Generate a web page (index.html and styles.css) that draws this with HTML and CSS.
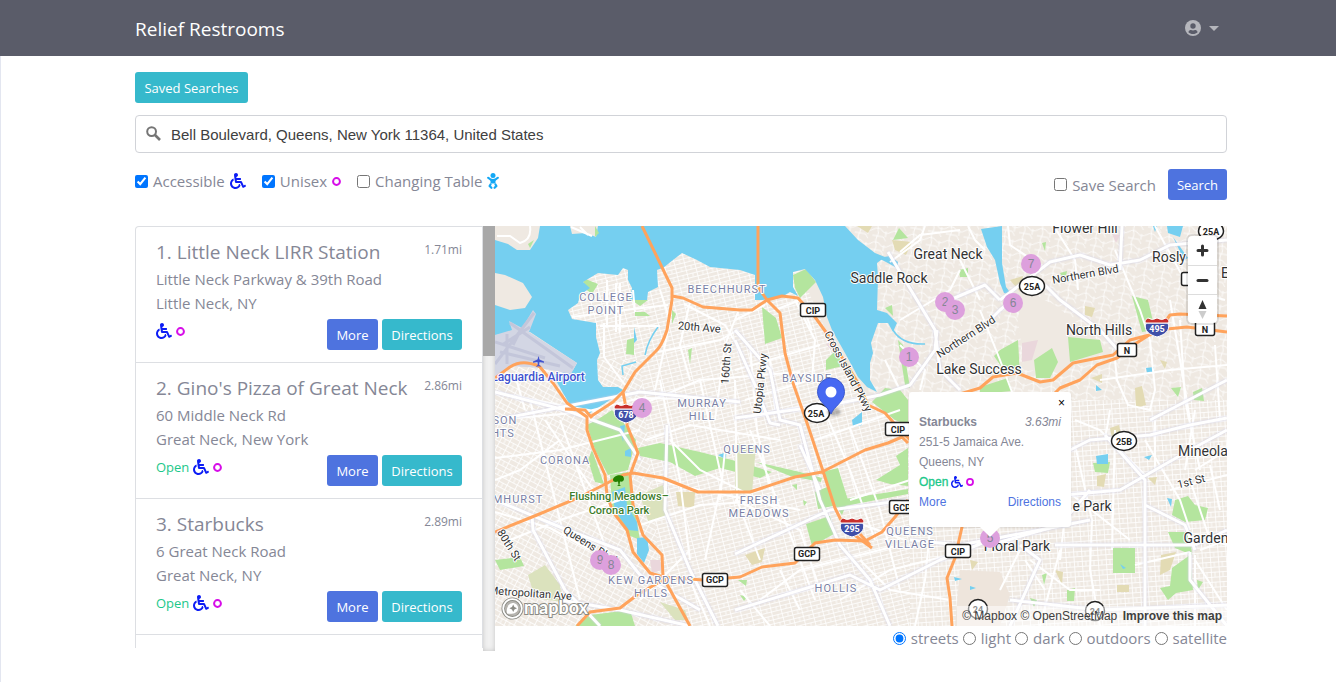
FILE: index.html
```html
<!DOCTYPE html>
<html lang="en">
<head>
<meta charset="utf-8">
<meta name="viewport" content="width=device-width, initial-scale=1">
<title>Relief Restrooms</title>
<link rel="stylesheet" href="styles.css">
</head>
<body>
<svg class="defs" aria-hidden="true">
  <symbol id="wheelchair" viewBox="0 0 512 512"><path d="M496.101 385.669l14.227 28.663c3.929 7.915.697 17.516-7.218 21.445l-65.465 32.886c-16.049 7.967-35.556 1.194-43.189-15.055L331.679 320H192c-15.925 0-29.426-11.71-31.679-27.475C126.433 55.308 128.38 70.044 128 64c0-36.358 30.318-65.635 67.052-63.929 33.271 1.545 60.048 28.905 60.925 62.201.868 32.933-23.152 60.423-54.608 65.039l4.67 32.69H336c8.837 0 16 7.163 16 16v32c0 8.837-7.163 16-16 16H215.182l4.572 32H352a32 32 0 0 1 28.962 18.392L438.477 396.8l36.178-18.349c7.915-3.929 17.517-.697 21.446 7.218zM311.358 352h-24.506c-7.788 54.204-54.528 96-110.852 96-61.757 0-112-50.243-112-112 0-41.505 22.694-77.809 56.324-97.156-3.712-25.965-6.844-47.86-9.488-66.333C45.956 198.464 0 261.963 0 336c0 97.047 78.953 176 176 176 71.87 0 133.806-43.308 161.11-105.192L311.358 352z"/></symbol>
  <symbol id="ring" viewBox="0 0 10 10"><circle cx="5" cy="5" r="3.8" fill="none" stroke="currentColor" stroke-width="2.2"/></symbol>
</svg>

<header class="navbar">
  <a class="brand" href="#">Relief Restrooms</a>
  <button class="account" type="button" aria-label="Account">
    <svg width="16" height="16" viewBox="0 0 16 16"><circle cx="8" cy="8" r="8" fill="#b5b6bc"/><circle cx="8" cy="6" r="2.7" fill="#5a5c69"/><path d="M3.4 12.2c.4-1.9 1.6-2.2 2.6-2.2.6.3 1.3.4 2 .4s1.400-.1 2-.4c1 0 2.200.3 2.600 2.200C11.400 13.400 9.800 14 8 14s-3.400-.6-4.600-1.800z" fill="#5a5c69"/></svg>
    <span class="caret"></span>
  </button>
</header>

<main class="page">
  <button class="btn info" type="button">Saved Searches</button>

  <form class="search">
    <div class="geocoder">
      <svg class="lens" width="16" height="16" viewBox="0 0 16 16" aria-hidden="true"><circle cx="5.600" cy="5.600" r="4.400" fill="none" stroke="#757575" stroke-width="2"/><path d="M9 9L14 14" stroke="#757575" stroke-width="2.600"/></svg>
      <input type="text" aria-label="Search location" value="Bell Boulevard, Queens, New York 11364, United States">
    </div>
    <div class="filters">
      <div class="checks">
        <label class="check"><input type="checkbox" checked>Accessible <svg class="chair"><use href="#wheelchair"/></svg></label>
        <label class="check"><input type="checkbox" checked>Unisex <svg class="ring"><use href="#ring"/></svg></label>
        <label class="check"><input type="checkbox">Changing Table
          <svg class="baby" viewBox="0 0 12 16"><circle cx="6" cy="2.500" r="2.500" fill="#14a8f5"/><path d="M1.200 4.800Q6 9.600 10.800 4.800" fill="none" stroke="#14a8f5" stroke-width="2.200" stroke-linecap="round"/><path d="M3.500 6.500h5v4h-5z" fill="#14a8f5"/><path d="M3.500 11.500L2.600 13l1.800 1.800M8.500 11.500L9.400 13l-1.800 1.800" fill="none" stroke="#14a8f5" stroke-width="2.200" stroke-linecap="round" stroke-linejoin="round"/></svg>
        </label>
      </div>
      <div class="submit">
        <label class="check"><input type="checkbox">Save Search</label>
        <button class="btn primary" type="button">Search</button>
      </div>
    </div>
  </form>

  <section class="results">
    <div class="list-wrap">
      <ol class="list">
        <li class="item">
          <div class="head"><h2>1. Little Neck LIRR Station</h2><small>1.71mi</small></div>
          <p>Little Neck Parkway &amp; 39th Road</p>
          <p>Little Neck, NY</p>
          <div class="foot"><span class="tags"><svg class="chair"><use href="#wheelchair"/></svg><svg class="ring"><use href="#ring"/></svg></span><span class="actions"><button class="btn primary" type="button">More</button><button class="btn info" type="button">Directions</button></span></div>
        </li>
        <li class="item">
          <div class="head"><h2>2. Gino's Pizza of Great Neck</h2><small>2.86mi</small></div>
          <p>60 Middle Neck Rd</p>
          <p>Great Neck, New York</p>
          <div class="foot"><span class="tags"><span class="open">Open</span><svg class="chair"><use href="#wheelchair"/></svg><svg class="ring"><use href="#ring"/></svg></span><span class="actions"><button class="btn primary" type="button">More</button><button class="btn info" type="button">Directions</button></span></div>
        </li>
        <li class="item">
          <div class="head"><h2>3. Starbucks</h2><small>2.89mi</small></div>
          <p>6 Great Neck Road</p>
          <p>Great Neck, NY</p>
          <div class="foot"><span class="tags"><span class="open">Open</span><svg class="chair"><use href="#wheelchair"/></svg><svg class="ring"><use href="#ring"/></svg></span><span class="actions"><button class="btn primary" type="button">More</button><button class="btn info" type="button">Directions</button></span></div>
        </li>
        <li class="item next"></li>
      </ol>
      <div class="track"><div class="thumb"></div></div>
    </div>

    <div class="map-col">
      <div class="map">
        <svg class="canvas" viewBox="495 226 732 400" preserveAspectRatio="xMinYMin slice" role="img" aria-label="Street map of Queens, New York">
          <defs>
            <pattern id="gridA" width="10" height="8" patternUnits="userSpaceOnUse" patternTransform="rotate(-14)"><path d="M0 .5H10M0 4.500H10M.5 0V8M6 0V4" class="street"/></pattern>
            <pattern id="gridB" width="9" height="10" patternUnits="userSpaceOnUse" patternTransform="rotate(28)"><path d="M0 .5H9M0 5.500H9M.5 0V10M5 0V5" class="street"/></pattern>
            <pattern id="gridC" width="8" height="10" patternUnits="userSpaceOnUse" patternTransform="rotate(-4)"><path d="M0 .5H8M0 5.500H8M.5 0V10M4 5V10" class="street"/></pattern>
            <pattern id="gridD" width="18" height="14" patternUnits="userSpaceOnUse" patternTransform="rotate(10)"><path d="M0 4Q5 0 9 4T18 4M4 0Q7 7 4 14M0 10H11L14 14M13 4V10" class="street"/></pattern>
          </defs>
          <path d="M495 226H1227V626H495z" fill="#efe9e2"/>
          <path d="M495 360H640L665 626H495z" fill="url(#gridB)"/>
          <path d="M570 250H790L830 340 870 400 910 430V626H665L640 360H570z" fill="url(#gridA)"/>
          <path d="M845 226H1227V400H870z" fill="url(#gridD)"/>
          <path d="M910 400H1227V626H910z" fill="url(#gridC)"/>
          <path d="M1022 290L1055 305 1110 350 1060 372 1025 370 1018 320z" fill="#efe9e2"/>
          <path d="M960 570L1000 572 1010 595 1000 626H955z" fill="#eee5dc"/>

          <g fill="#b4e59e">
            <path d="M587 425L600 418 612 410 620 418 636 440 628 470 608 475 595 450zM592 450L604 484 595 482 588 460zM610 475L628 472 634 505 640 540 628 535 612 505z"/>
            <path d="M638 448L660 443 700 452 740 462 772 472 760 478 720 468 695 476 670 462 640 456zM756 462L800 472 822 478 821 482 790 476z"/>
            <path d="M822 472L838 468 848 500 842 515 835 505zM815 492L832 485 838 505 818 509zM806 524L830 516 834 534 812 546z"/>
            <path d="M838 500L890 492 908 489V494L845 506zM876 480L900 465 896 456 908 448V486L890 484z"/>
            <path d="M762 307L776 318 782 338 765 344zM826 360L836 350 843 366 826 370zM872 402L885 388 900 390 908 400V425L895 420z"/>
            <path d="M793 275L806 269 816 282 806 292 800 298 795 288z"/>
            <path d="M583 278L598 284 592 294 584 288zM628 226H646L644 235H636zM628 298L648 300 640 306z"/>
            <path d="M1132 296L1148 300 1155 330 1142 332zM1068 337L1100 340 1103 352 1070 362zM1000 350L1018 340 1020 375 1005 372 994 356zM1034 360L1052 348 1058 362 1050 378 1036 378z"/>
            <path d="M980 387L1008 378 1012 391 980 394zM1113 548H1135V573H1113zM1175 500L1188 496 1195 505 1208 508 1205 520 1185 522 1172 515zM1168 532H1190L1192 555 1175 548z"/>
            <path d="M1172 568L1190 555 1193 590 1176 593 1168 600 1160 588 1170 586zM1093 463L1110 462 1108 473 1095 472zM1171 388L1181 387 1178 397zM1193 392L1202 388 1204 401 1194 400z"/>
            <path d="M590 615L630 610 635 626H575zM495 560L520 557 524 566 500 570zM1030 598L1037 600 1034 607zM1067 590L1075 588 1074 601H1067zM1042 575L1047 573 1044 585zM893 240L899 228 908 238zM959 270L968 268 968 277 960 277zM885 308L892 305 893 316zM635 312L645 312 650 316H635zM627 340L634 338 634 355 626 354zM688 350L692 348 690 364zM898 340L903 345 910 388 905 385z"/>
            <path d="M738 580L747 580 746 586zM1060 273L1067 271 1065 282zM1042 243L1046 242 1045 251zM672 310L676 314 672 324zM740 448L746 450 744 455zM803 500L807 502 804 506zM792 485L797 484 797 490zM740 595L747 597 744 601zM1197 580L1203 582 1198 590z"/>
          </g>
          <g fill="#dbe2bd">
            <path d="M735 443L756 446 752 493H735zM640 495L663 485 668 515 648 521zM528 575L545 565 560 585 562 602 535 598zM660 602L685 610 688 620 675 620z"/>
          </g>
          <g fill="#e3dbb4">
            <path d="M892 240L912 242 906 255 895 250zM1085 306L1095 308 1092 317 1085 315zM1010 280L1023 276 1020 292zM1135 388L1142 386 1146 405 1136 408zM745 555L765 548 762 562 752 565zM676 492L695 492 694 508 678 506zM857 226L872 226 868 233zM1110 428L1119 425 1122 438 1112 438zM1097 476L1106 474 1104 487 1097 486zM1091 378L1102 374 1102 383zM1117 585H1129V592H1117zM1161 555L1176 552 1170 570 1160 575zM1055 570L1063 572 1062 585zM1148 478L1157 477 1155 485zM760 229L767 230 766 239zM1160 360L1167 362 1165 369zM970 560L978 562 972 570z"/>
          </g>
          <path d="M1022 343L1038 340 1032 360 1022 362zM1112 234L1120 235 1116 243zM650 560L660 560 662 570 652 573zM826 344L831 342 831 350z" fill="#ead7dc"/>

          <g fill="#75cff0">
            <path d="M495 226H845L858 240 875 253 885 257 877 263 878 277 877 310 887 313 897 323 893 332 888 323 878 323 871 343 873 353 870 363 870 380 877 392 867 387 858 377 845 353 832 330 827 317 823 297 815 280 805 269 793 272 793 287 798 296 790 292 780 298 762 300 755 300V275L740 270 710 267 697 260 682 253 673 260 663 268 657 270 658 287 648 292 647 300 630 300 632 288 628 280V270L623 268 618 275 598 273 583 282 590 288 580 295 578 303 568 310 572 319 596 323V337L600 353 597 360 598 380 603 387 618 387 623 390 607 402 590 413 573 410 563 393 553 375 573 370 577 363 530 332 495 335z"/>
            <path d="M981 229L1002 226V263L1006 287 1012 295 1004 293 1000 283 995 260 987 247zM1167 226H1183L1180 237 1168 233zM1173 237L1188 258 1184 260z"/>
            <path d="M612 492L625 487 627 505 637 522 638 531 628 530 615 510zM637 538L647 537 649 550 644 563 637 554zM620 426L625 425 623 442zM625 451L631 448 631 457 625 456z"/>
            <path d="M1096 456L1108 454 1108 464 1097 464zM1153 226L1157 226 1155 232zM1144 457L1152 455 1149 460zM1167 498L1172 499 1171 507zM954 577L962 579 955 581zM970 586L976 588 970 590zM852 420L862 412 862 425 853 427zM718 455L727 452 725 459zM634 327L637 340 634 343zM1096 385L1102 390 1096 391zM1146 368L1154 367 1153 373 1147 373zM1120 564L1126 568 1123 569zM878 258L890 256 898 262 897 268 886 262z"/>
            <path d="M658 327Q648 340 645 355M893 330Q902 345 925 344M636 362L622 366 623 375" fill="none" stroke="#75cff0" stroke-width="1.500"/>
          </g>
          <g fill="#efe9e2">
            <path d="M495 226H540L538 238 530 250 517 250 508 244 495 240zM495 273L505 275 523 283 532 297 525 308 510 310 495 305zM570 226H598L596 237 586 233 572 234z"/>
          </g>
          <path d="M497 236H510L520 243Q532 240 530 226M571 227L592 236M580 227L588 235" fill="none" stroke="#fff" stroke-width="2"/>
          <path d="M595 226L599 233 595 237zM528 244L534 240 530 248z" fill="#b4e59e"/>
          <path d="M495 335L512 330 509 321 522 328 533 310 536 314 529 332 577 363 571 374 540 368 510 366 495 378z" fill="#d3d6e4"/>
          <path d="M495 364L534 313M510 323L573 368M495 342L545 358M500 352L560 366M507 334L507 364M520 331L513 345M502 345L530 327" fill="none" stroke="#c3c6da" stroke-width="3"/>

          <g class="minor">
            <path d="M572 317L625 310 668 305M600 326H660M604 323V357L625 385M607 280V325M616 283V332M620 283V332M633 290L635 312M658 352L720 340 738 330M684 304L725 325 740 350M690 302L680 345 690 380M738 312L725 345 715 420M660 290L670 320 664 350 655 390"/>
            <path d="M495 392L560 405 600 412M495 420L585 412 640 398 735 400M515 375L525 410M495 458L560 450 640 430M495 480L520 470 560 440M530 400L580 600M560 420L610 560M510 540L560 520 620 500M545 420L600 500M495 512L550 528 590 550"/>
            <path d="M640 405L700 380 800 372M645 440L690 425 780 440M660 380L680 480 690 560M700 380L722 480 705 560M735 380L737 500 760 560M640 525L700 505 780 500M655 480L700 490 800 510M690 550L640 600M670 440L700 470 780 510M725 450L720 500M690 580L710 626M735 500L800 530 820 590M750 430L800 560 815 600M750 345L757 430 770 490M735 370L820 345M745 400L810 380M735 320L765 305M795 300L815 340 812 380M775 310L800 300 812 330M770 360L775 410M745 418L830 400"/>
            <path d="M850 428L880 510 900 590M820 400L850 470 875 540M815 440L900 410M780 570L800 610M760 600L800 570 900 545M850 500L910 480M850 520L905 540M840 600L890 570 950 555M860 560L890 590 950 600M930 530L925 580 915 626M740 590L770 626"/>
            <path d="M1055 228L1075 260 1078 290M1008 226L1010 245 1040 265M1115 250L1140 310 1150 340M1155 226L1190 290 1225 300M1170 300L1190 420M1150 340L1155 390 1150 410 1128 405 1117 380 1115 360M1100 380L1170 370 1227 365M1180 320L1185 400 1200 470M1215 345L1220 420M1050 395L1060 430M1110 410L1105 440M980 310L1000 360 1015 400M900 345L925 370 920 390M885 360L900 390M960 260L980 300M900 252L920 235 960 230M900 320L950 290 960 270M925 226L920 240 890 262M968 226L975 240 985 250"/>
            <path d="M1075 445L1092 520 1090 570 1100 626M1115 430L1112 550M1145 480V626M1200 550L1227 540M1195 470L1227 450M1170 490L1227 475M1190 480L1210 540 1227 545M1040 470L1130 540M1060 550L1040 626M1020 550L1000 590M1030 560L1070 590 1100 590M1135 565L1190 552M1195 555V626M1195 560L1227 610M1070 470L1060 560M1145 440L1180 500 1190 530M1075 420L1100 430 1145 475M1155 420V470M1025 560L1045 590M1195 410L1185 470M1210 465L1220 510"/>
          </g>
          <g class="major">
            <path d="M495 392L565 410 620 430 640 460M495 500L560 527 620 550 640 575 700 610M495 420L640 392 740 402M532 515L533 530 565 590 585 610 600 626M667 425L665 510 690 570 705 600 718 626M560 600L620 610 690 626M735 554L830 510 908 500M735 340L755 385 770 423 780 425M735 418L830 405 880 395 910 385 935 350 937 330M735 330L770 370 780 420 800 425 820 500 840 545 870 580 890 626M735 610L850 575 880 590 940 560 990 540M888 252L935 330 940 370 960 390M945 302L985 285 1000 300M980 330L1000 310 1018 295M800 445L820 490M910 540L960 545 1040 530 1090 520"/>
            <path d="M1000 300L1050 262 1080 255 1110 265 1140 260 1170 245 1227 240M1045 285L1060 300 1100 330 1118 350M1122 226L1120 270M1065 495L1120 490 1190 450 1227 430M1070 450L1090 440 1150 435 1190 425 1227 418M1105 435L1145 480 1145 626M1145 505L1185 525 1195 550M1055 545H1195M1190 552V580L1227 626M990 545L1060 525 1090 490M1010 626L1040 560 1020 545M1150 420L1227 380M1195 545L1227 530M1010 600L1100 610 1227 605"/>
          </g>
          <g class="motorway">
            <path d="M642 226L672 288V300L667 330Q662 345 657 350L635 372 623 392 627 413V425L638 453 630 475 633 505 643 535 662 555 663 577 690 626"/>
            <path d="M495 378L510 367Q518 362 527 363 536 364 540 367L553 383 567 403 587 417V430L593 448 605 475 607 495 613 512 627 530 633 552 650 573 663 577 703 580 740 577 762 567 795 563 815 543 835 540 865 541 882 532 895 517 908 500"/>
            <path d="M590 417L613 402 623 392M565 409L585 410 592 418M672 296L683 298 703 307 740 310H752L767 300 782 296 798 298 815 317 828 335 858 383 868 405 885 413 893 422 905 435 962 490V527L955 558 947 578 950 598 952 626"/>
            <path d="M758 226V287L767 300 780 313 785 353 793 383 807 423 822 468 835 508 845 528 872 548M495 532L537 515 580 497 623 475 633 473 663 478 698 492H750L795 477 822 472 865 450 888 443 902 437 908 443"/>
            <path d="M960 394L980 388 993 377 1017 373 1040 382 1053 380 1073 363 1113 355 1130 340 1157 333 1170 315 1180 314 1227 316M1055 393L1060 388 1080 380 1097 365 1117 358 1135 344 1157 330 1187 327 1227 332M577 626L590 612 620 608 637 595 663 580M860 534L870 545"/>
          </g>

          <g class="area">
            <text x="606" y="301">COLLEGE</text><text x="606" y="314">POINT</text>
            <text x="727" y="293">BEECHHURST</text><text x="807" y="382">BAYSIDE</text>
            <text x="702" y="407">MURRAY</text><text x="702" y="420">HILL</text>
            <text x="747" y="453">QUEENS</text><text x="565" y="464">CORONA</text>
            <text x="759" y="504">FRESH</text><text x="759" y="517">MEADOWS</text>
            <text x="910" y="535">QUEENS</text><text x="910" y="548">VILLAGE</text>
            <text x="651" y="584">KEW GARDENS</text><text x="651" y="597">HILLS</text>
            <text x="836" y="592">HOLLIS</text><text x="518" y="503">MHURST</text>
            <text x="505" y="424">SON</text><text x="503" y="437">HTS</text>
          </g>
          <g class="town">
            <text x="1085" y="233">Flower Hill</text><text x="948" y="259">Great Neck</text><text x="889" y="283">Saddle Rock</text>
            <text x="1169" y="262">Rosly</text><text x="1225" y="278">E</text><text x="1099" y="335">North Hills</text><text x="979" y="374">Lake Success</text>
            <text x="1203" y="456">Mineola</text><text x="1206" y="543">Garden</text><text x="1092" y="511">e Park</text><text x="1017" y="551">Floral Park</text>
          </g>
          <g class="road">
            <text transform="translate(699 331) rotate(5)">20th Ave</text>
            <text transform="translate(730 364) rotate(-86)">160th St</text>
            <text transform="translate(764 384) rotate(-84)">Utopia Pkwy</text>
            <text transform="translate(845 373) rotate(62)">Cross Island Pkwy</text>
            <text transform="translate(968 340) rotate(-33)">Northern Blvd</text>
            <text transform="translate(1086 278) rotate(-10)">Northern Blvd</text>
            <text transform="translate(506 547) rotate(58)">80th St</text>
            <text transform="translate(588 548) rotate(32)">Queens Blvd</text>
            <text transform="translate(530 597) rotate(4)">Metropolitan Ave</text>
            <text transform="translate(1192 485) rotate(-14)">1st St</text>
          </g>
          <g class="poi airport"><text x="538" y="381">Laguardia Airport</text><path d="M538.500 356l1 3.500 4.500 2v1.200l-4.500-.8-.3 3 1.500 1.100v.8l-2.200-.5-2.200.5v-.8l1.500-1.100-.3-3-4.500.8v-1.200l4.500-2z" fill="#4052cf"/></g>
          <g class="poi park"><text x="619" y="500">Flushing Meadows–</text><text x="619" y="514">Corona Park</text><path d="M613 480c0-5 11-7 11-1 0 2-2 3-4 2.500l-.5 3.500 1.500 1h-4l1.500-1-.5-3.500c-2 1-5 .5-5-1.500z" fill="#238000"/></g>

          <g class="shield">
            <rect x="800.500" y="303.500" width="25" height="13" rx="2"/><text x="813" y="314">CIP</text>
            <rect x="885.500" y="422.500" width="25" height="13" rx="2"/><text x="898" y="433">CIP</text>
            <rect x="889.500" y="500.500" width="25" height="13" rx="2"/><text x="902" y="511">GCP</text>
            <rect x="794.500" y="547.500" width="25" height="13" rx="2"/><text x="807" y="557">GCP</text>
            <rect x="702.500" y="573.500" width="25" height="13" rx="2"/><text x="715" y="583">GCP</text>
            <rect x="945.500" y="544.500" width="25" height="13" rx="2"/><text x="958" y="555">CIP</text>
            <rect x="1117.500" y="343.500" width="19" height="13" rx="2"/><text x="1127" y="354">N</text>
            <rect x="1195.500" y="321.500" width="19" height="14" rx="2"/><text x="1205" y="333">N</text>
            <rect x="1181.500" y="272.500" width="19" height="13" rx="2"/>
            <ellipse cx="817" cy="413" rx="12.500" ry="9.500"/><text x="816" y="417">25A</text>
            <ellipse cx="1032" cy="286" rx="12.500" ry="9.500"/><text x="1032" y="290">25A</text>
            <ellipse cx="1124" cy="441" rx="12.500" ry="9.500"/><text x="1124" y="445">25B</text>
            <ellipse cx="1211" cy="231" rx="12.500" ry="9.500"/><text x="1211" y="235">25A</text>
            <circle cx="978" cy="609" r="9.500"/><text x="978" y="613">24</text>
            <circle cx="1095" cy="611" r="9.500"/><text x="1095" y="615">24</text>
          </g>
          <g class="interstate">
            <g transform="translate(626 413)"><path class="blue" d="M-11-4H11C14 4 7 8 0 10-7 8-14 4-11-4z"/><path class="red" d="M-11-4C-13-6-11-8-9-9Q-5-6 0-9 5-6 9-9C11-8 13-6 11-4z"/><text y="5">678</text></g>
            <g transform="translate(852 527)"><path class="blue" d="M-11-4H11C14 4 7 8 0 10-7 8-14 4-11-4z"/><path class="red" d="M-11-4C-13-6-11-8-9-9Q-5-6 0-9 5-6 9-9C11-8 13-6 11-4z"/><text y="5">295</text></g>
            <g transform="translate(1157 327)"><path class="blue" d="M-11-4H11C14 4 7 8 0 10-7 8-14 4-11-4z"/><path class="red" d="M-11-4C-13-6-11-8-9-9Q-5-6 0-9 5-6 9-9C11-8 13-6 11-4z"/><text y="5">495</text></g>
          </g>
          <ellipse class="shade" cx="834" cy="412" rx="7" ry="4"/>
          <path d="M831 414C828 406 817.500 402 817.500 391.500a13.500 13.500 0 0 1 27 0C844.500 402 834 406 831 414z" fill="#4668f2" stroke="#3b58cd"/><circle cx="831" cy="392" r="5.500" fill="#fff"/>
        </svg>

        <button class="pin p1" type="button">1</button><button class="pin p2" type="button">2</button><button class="pin p3" type="button">3</button>
        <button class="pin p4" type="button">4</button><button class="pin p5" type="button">5</button><button class="pin p6" type="button">6</button>
        <button class="pin p7" type="button">7</button><button class="pin p9" type="button">9</button><button class="pin p8" type="button">8</button>

        <div class="popup">
          <button class="close" type="button" aria-label="Close">×</button>
          <div class="row"><strong>Starbucks</strong><em>3.63mi</em></div>
          <div>251-5 Jamaica Ave.</div>
          <div>Queens, NY</div>
          <div class="state"><span>Open</span><svg class="chair"><use href="#wheelchair"/></svg><svg class="ring"><use href="#ring"/></svg></div>
          <div class="row"><a href="#">More</a><a href="#">Directions</a></div>
        </div>

        <div class="zoom">
          <button type="button" aria-label="Zoom in"><svg width="29" height="29"><path d="M14.500 10v9M10 14.500h9" class="sign"/></svg></button>
          <button type="button" aria-label="Zoom out"><svg width="29" height="29"><path d="M10 14.500h9" class="sign"/></svg></button>
          <button type="button" aria-label="Reset bearing"><svg width="29" height="29"><path d="M14.500 5l4 9h-8z" fill="#333"/><path d="M14.500 24l4-8h-8z" fill="#ccc"/></svg></button>
        </div>

        <a class="logo" href="#" aria-label="Mapbox">
          <svg width="88" height="23" viewBox="0 0 88 23"><circle cx="11.500" cy="11.500" r="9.300" fill="#8e8e88" fill-opacity=".6" stroke="#8c8c86" stroke-width="3.500"/><circle cx="11.500" cy="11.500" r="9.300" fill="none" stroke="#fff" stroke-width="1.800"/><path d="M6 16.500c-.8-5 .5-9.500 5.500-10.500 4 0 6 3 5.500 6-.9 4.500-6 5.500-11 4.500z" fill="#fff"/><path d="M12.200 7.500l1.200 2.600 2.600 1.200-2.600 1.200-1.200 2.600-1.200-2.600-2.600-1.200 2.600-1.200z" fill="#8c8c86"/><text x="23" y="17">mapbox</text></svg>
        </a>
        <div class="credit"><a href="#">© Mapbox</a> <a href="#">© OpenStreetMap</a> <a class="improve" href="#">Improve this map</a></div>
      </div>

      <fieldset class="styles">
        <label><input type="radio" name="style" checked>streets</label>
        <label><input type="radio" name="style">light</label>
        <label><input type="radio" name="style">dark</label>
        <label><input type="radio" name="style">outdoors</label>
        <label><input type="radio" name="style">satellite</label>
      </fieldset>
    </div>
  </section>
</main>
</body>
</html>
```

FILE: styles.css
```css
* { box-sizing: border-box; }
body { margin: 0; background: #fff; color: #858796; font: 15px/24px "Open Sans", "Noto Sans", sans-serif; }
a { text-decoration: none; color: inherit; }
button { font-family: inherit; border: 0; cursor: pointer; }
p, h2 { margin: 0; font-weight: 400; }
.defs { display: none; }

.navbar { display: flex; align-items: center; justify-content: space-between; height: 56px; padding: 0 117px 0 135px; background: #5a5c69; }
.brand { color: #fff; font-size: 19px; line-height: 30px; padding-top: 2px; }
.account { display: flex; align-items: center; gap: 8px; padding: 0; background: none; }
.caret { border: 5px solid transparent; border-top-color: #b5b6bc; border-bottom: 0; }

.page { min-height: calc(100vh - 56px); padding: 16px 109px 31px 134px; border-left: 1px solid #e3e6f0; }
.btn { height: 31px; padding: 2px 8px 0; border-radius: 3px; color: #fff; font-size: 13px; line-height: 21px; white-space: nowrap; }
.info { background: #36b9cc; }
.primary { background: #4e73df; }
.page > .btn { display: block; min-width: 113px; }

.geocoder { display: flex; align-items: center; gap: 9px; height: 38px; margin-top: 12px; padding-left: 10px; border: 1px solid #d1d3d8; border-radius: 4px; }
.geocoder input { flex: 1; min-width: 0; border: 0; outline: 0; padding: 0; background: none; color: #404040; font: 15px "Liberation Sans", Arial, sans-serif; }
.filters { display: flex; justify-content: space-between; margin-top: 16px; }
.checks { display: flex; gap: 16px; height: 24px; }
.check { display: flex; align-items: center; gap: 5px; white-space: nowrap; }
.check input { width: 13px; height: 13px; margin: 0; accent-color: #0075ff; }
.submit { display: flex; align-items: center; gap: 12px; }
.submit .btn { min-width: 59px; }
.chair { width: 16px; height: 16px; fill: #0c1cf5; }
.ring { width: 9px; height: 9px; color: #d60ce8; }
.baby { width: 12px; height: 16px; }

.results { display: flex; margin-top: 26px; }
.list-wrap { flex: 0 0 360px; display: flex; height: 425px; }
.list { flex: 1; list-style: none; margin: 0 0 3px; padding: 0; overflow: hidden; border: 1px solid #dddfe3; border-bottom: 0; border-radius: 4px 0 0 0; }
.item { padding: 12px 20px; border-bottom: 1px solid #dddfe3; }
.item p { line-height: 24px; }
.head { display: flex; justify-content: space-between; height: 24px; margin-bottom: 4px; white-space: nowrap; }
.head h2 { font-size: 19px; line-height: 26px; }
.head small { font-size: 12px; line-height: 22px; }
.foot { display: flex; justify-content: space-between; margin-top: 4px; }
.tags { display: flex; align-items: center; gap: 4px; height: 24px; }
.open { color: #1cc88a; font-size: 13px; line-height: 26px; }
.actions { display: flex; gap: 4px; }
.actions .primary { min-width: 51px; }
.actions .info { min-width: 80px; }
.track { width: 12px; background: #f1f1f1; box-shadow: inset 0 0 5px #c4c4c4; }
.thumb { height: 130px; background: #a8a8a8; }

.map-col { flex: 1; min-width: 0; }
.map { position: relative; height: 400px; overflow: hidden; font: 12px/20px "Liberation Sans", Arial, sans-serif; }
.canvas { display: block; width: 100%; height: 100%; }
.street { fill: none; stroke: #fff; stroke-width: 1; stroke-opacity: .8; }
.minor { fill: none; stroke: #fff; stroke-width: 2; }
.major { fill: none; stroke: #fff; stroke-width: 3; stroke-linejoin: round; filter: drop-shadow(0 0 1px #cfcfe6); }
.motorway { fill: none; stroke: #ffa35c; stroke-width: 3; stroke-linejoin: round; }
.shade { fill: #000; opacity: .25; filter: blur(1px); }
.canvas text { text-anchor: middle; paint-order: stroke; stroke: #fff; stroke-width: 2; stroke-linejoin: round; font-family: Roboto, sans-serif; }
.area text { font-size: 11px; letter-spacing: 1px; fill: #7a7fa5; }
.town text { font-size: 14px; fill: #333; }
.road text { font-size: 11px; fill: #333; }
.poi text { font-size: 11px; font-weight: 500; }
.airport text { font-size: 12px; fill: #4052cf; }
.park text { fill: #3d7d2b; }
.shield rect, .shield ellipse, .shield circle { fill: #fff; stroke: #222; stroke-width: 1.5; }
.shield text { font-size: 9px; font-weight: 700; fill: #222; stroke: none; }
.interstate text { font-size: 9px; font-weight: 700; fill: #fff; stroke: none; }
.blue { fill: #3f4fa8; stroke: #fff; }
.red { fill: #c8302c; stroke: #fff; }

.pin { position: absolute; width: 20px; height: 20px; padding: 0; border-radius: 50%; background: #dda0dd; color: #858796; font-size: 12px; line-height: 20px; }
.p1 { left: 404px; top: 121px; }
.p2 { left: 440px; top: 66px; }
.p3 { left: 450px; top: 74px; }
.p4 { left: 137px; top: 172px; }
.p5 { left: 485px; top: 302px; }
.p6 { left: 508px; top: 67px; }
.p7 { left: 526px; top: 28px; }
.p8 { left: 106px; top: 329px; }
.p9 { left: 95px; top: 324px; }

.popup { position: absolute; left: 414px; top: 166px; width: 162px; padding: 20px 10px 15px; border-radius: 3px; background: #fff; box-shadow: 0 1px 2px rgba(0, 0, 0, .1); }
.popup::after { content: ""; position: absolute; left: 71px; top: 135px; border: 10px solid transparent; border-top-color: #fff; border-bottom: 0; }
.close { position: absolute; right: 4px; top: 4px; padding: 0 2px; background: none; color: #000; font-size: 12px; line-height: 14px; }
.row { display: flex; justify-content: space-between; }
.popup a { color: #4e73df; }
.state { display: flex; align-items: center; gap: 3px; color: #1cc88a; -webkit-text-stroke: 0.3px; }
.state .chair { width: 12px; height: 12px; }
.state .ring { width: 8px; height: 8px; }

.zoom { position: absolute; right: 10px; top: 10px; width: 29px; border-radius: 4px; background: #fff; box-shadow: 0 0 0 2px rgba(0, 0, 0, .1); overflow: hidden; }
.zoom button { display: block; width: 29px; height: 29px; padding: 0; background: none; }
.zoom button + button { border-top: 1px solid #ddd; }
.sign { stroke: #333; stroke-width: 3; stroke-linecap: round; }
.logo { position: absolute; left: 6px; bottom: 6px; height: 23px; }
.logo text { font: 700 18px Lato, sans-serif; fill: #fff; paint-order: stroke; stroke: #8c8c86; stroke-width: 2; }
.credit { position: absolute; right: 0; bottom: 0; padding: 0 5px; background: rgba(255, 255, 255, .5); color: #404040; white-space: nowrap; }
.improve { margin-left: 2px; font-weight: 700; }

.styles { display: flex; justify-content: flex-end; gap: 4px; margin: 0; padding: 0; border: 0; }
.styles label { display: flex; align-items: center; gap: 5px; }
.styles input { width: 13px; height: 13px; margin: 0; accent-color: #0075ff; }
```
